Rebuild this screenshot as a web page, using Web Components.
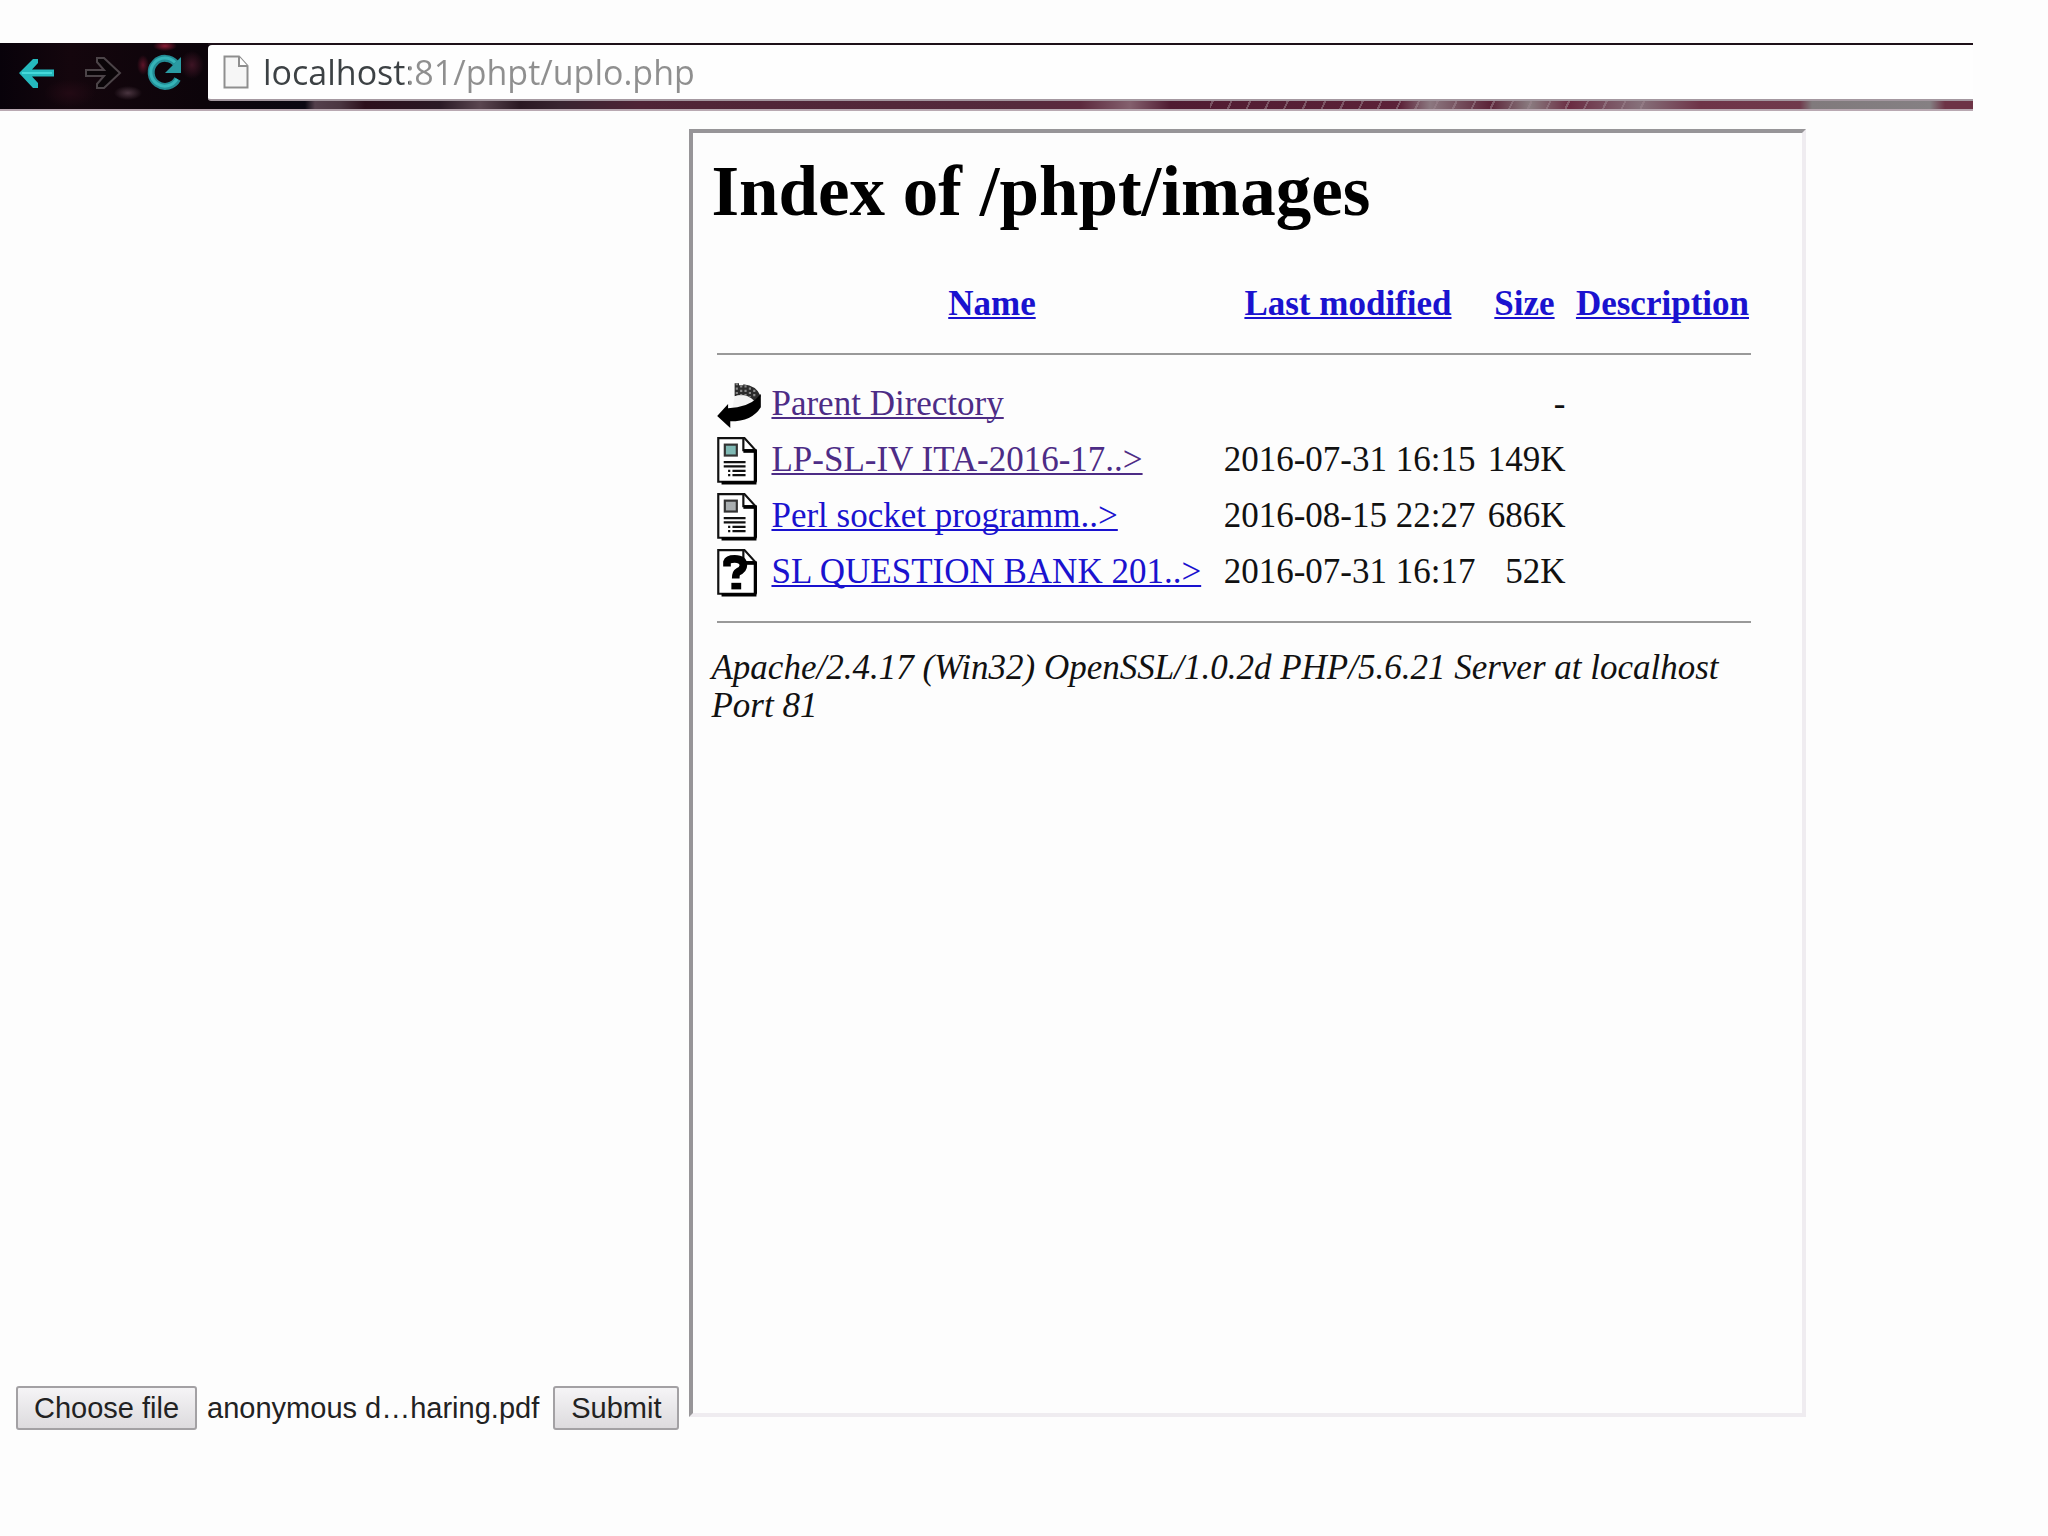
<!DOCTYPE html>
<html lang="en">
<head>
<meta charset="utf-8">
<title>localhost:81/phpt/uplo.php</title>
<style>
  html { background: #fdfdfd; }
  body { margin: 0; font-family: "Liberation Serif", "Times New Roman", serif; color: #111; }
</style>
</head>
<body>
<upload-page></upload-page>

<script>
class BrowserBar extends HTMLElement {
  constructor() {
    super();
    this.attachShadow({ mode: 'open' }).innerHTML = `
      <style>
        :host {
          display: flex; box-sizing: border-box; height: 68px; padding-top: 2px;
          border-bottom: 2px solid #b9a9b2;
          background:
            linear-gradient(#1d1018, #1d1018) 208px 0 / 100% 2px no-repeat,
            radial-gradient(ellipse 14px 7px at 128px 50px, #4a3540, transparent),
            radial-gradient(ellipse 12px 5px at 165px 3px, #8a1c34, transparent),
            radial-gradient(ellipse 6px 10px at 143px 22px, #5c1428, transparent),
            radial-gradient(ellipse 12px 14px at 192px 22px, #3d1424, transparent),
            radial-gradient(ellipse 26px 14px at 70px 50px, #220a14, transparent),
            repeating-linear-gradient(115deg, transparent 0 9px, #9c848e88 9px 11px, transparent 11px 17px) 1210px 0 / 440px 100% no-repeat,
            linear-gradient(90deg, #08020a 0, #14060d 70px, #0c040a 205px, #0b0812 305px, #54404c 315px,
              #4a3641 340px, #2c101c 365px, #2a1a25 440px, #5a4650 480px, #2a1822 520px, #382430 560px,
              #4f2436 640px, #552a3c 1020px, #5c2a3e 1080px, #84606e 1130px, #501c32 1170px, #5c2238 1400px,
              #8c7880 1430px, #5c2438 1490px, #8a7c80 1530px, #6a2c42 1570px, #86707a 1640px, #6e3448 1700px,
              #703a4c 1800px, #807a7c 1812px, #858083 1930px, #6d3346 1945px);
        }
        nav { display: flex; align-items: center; gap: 22px; box-sizing: border-box; width: 208px; padding: 0 0 8px 16px; }
        button { display: block; padding: 0; border: 0; background: none; width: 42px; height: 40px; }
        svg { display: block; width: 42px; height: 40px; overflow: visible; }
        form { flex: 1; display: flex; align-items: center; gap: 14px; height: 54px; margin: 0; padding-left: 15px;
          background: #fefefe; border-bottom: 2px solid #a498a0; border-radius: 4px 0 0 3px; }
        form svg { flex: none; width: 26px; height: 34px; }
        input { flex: 1; min-width: 0; height: 46px; padding: 0; border: 0; outline: 0;
          font: 34px/46px "Open Sans", "Noto Sans", sans-serif; color: transparent;
          background: linear-gradient(90deg, #3c4144 0 146px, #8f8f8f 146px); -webkit-background-clip: text; background-clip: text; }
      </style>
      <nav aria-label="History">
        <button type="button" aria-label="Back"><svg viewBox="0 0 42 40"><path d="M3 20 L17 6 H22 V10 L16 16.500 H38 V23.500 H16 L22 30 V35 H17 Z" fill="#25b9bd"/><path d="M6 20H36" stroke="#45d9da" stroke-width="2"/></svg></button>
        <button type="button" aria-label="Forward"><svg viewBox="0 0 42 40"><path d="M6 17H24L17 9V5H24L40 20L24 35H17V31L24 23H6Z" fill="#0a0508" stroke="#4c4448" stroke-width="2"/></svg></button>
        <button type="button" aria-label="Reload"><svg viewBox="0 0 42 40"><path d="M32 10.500A14 14 0 1 0 33.500 26" fill="none" stroke="#238b94" stroke-width="7"/><path d="M31 9.500A14 14 0 1 0 33 26" fill="none" stroke="#35b4b8" stroke-width="3"/><path d="M37 4V20H21Z" fill="#2a9aa2"/></svg></button>
      </nav>
      <form>
        <svg viewBox="0 0 26 34" aria-hidden="true"><path d="M1.500 1.500H16L24.500 11V32.500H1.500Z" fill="#f6f6f6" stroke="#8f8f8f" stroke-width="2"/><path d="M16 1.500V11H24.500" fill="#fff" stroke="#8f8f8f" stroke-width="2"/></svg>
        <input type="text" aria-label="Address" value="localhost:81/phpt/uplo.php" spellcheck="false">
      </form>`;
  }
}
customElements.define('browser-bar', BrowserBar);

const ICONS = {
  back: `
    <path d="M8 1H10V2H12V1.500Q18 2 20 7L17 9Q13 5.500 8 7Z" fill="#2b2b2b"/>
    <path d="M9 1V7M11 2V7M13 2V7M15 3V7.500M17 4V8" stroke="#888" stroke-width="1" stroke-dasharray="1 1"/>
    <path d="M8 7Q13 5.500 16.500 9Q12 12 7 12.500Z" fill="#f4f4f4"/>
    <path d="M0 16L5 10.500V12.500Q14 12 18 8L20 6V12Q16 18.500 6 18.500V21.500Z" fill="#000"/>`,
  sheet: `
    <path d="M.5 .5H12.500L17.500 6V20.500H.5Z" fill="#fff" stroke="#111"/>
    <path d="M17.500 6V20.500M18 21H2" fill="none" stroke="#000" stroke-width="1.500"/>
    <path d="M12 .5V6H18" fill="none" stroke="#111" stroke-width="1"/>
    <path d="M12 6.500H18" stroke="#000" stroke-width="1.500"/>`,
  unknown: `
    <path d="M4.500 8V6Q5 4.500 8 4.500Q12 4.500 12 7.500Q12 9.500 9.500 10.500Q8.500 11 8.500 13.500" fill="none" stroke="#000" stroke-width="3.500"/>
    <path d="M6.500 15.500H11V18.500H6.500Z" fill="#000"/>`
};
const layout = fill => `
    <rect x="3.500" y="3.500" width="5.500" height="5" fill="${fill}" stroke="#333"/>
    <path d="M3 11.500H13M3 13.500H13M7 15.500H13M5 15.500H6M5 17.500H6M7 17.500H13" stroke="#111"/>`;

class FileIcon extends HTMLElement {
  connectedCallback() {
    const kind = this.getAttribute('kind');
    const art = kind === 'back' ? ICONS.back
      : kind === 'unknown' ? ICONS.sheet + ICONS.unknown
      : ICONS.sheet + layout(kind === 'layout-color' ? '#7fb9b4' : '#a9aeb0');
    this.attachShadow({ mode: 'open' }).innerHTML = `
      <style>:host { display: block; } svg { display: block; width: 44px; height: 48px; }</style>
      <svg viewBox="0 0 20 22" aria-hidden="true">${art}</svg>`;
  }
}
customElements.define('file-icon', FileIcon);

class DirectoryIndex extends HTMLElement {
  constructor() {
    super();
    const files = [
      ['back', 'Parent Directory', '', '-', true],
      ['layout-color', 'LP-SL-IV ITA-2016-17..&gt;', '2016-07-31 16:15', '149K', true],
      ['layout', 'Perl socket programm..&gt;', '2016-08-15 22:27', '686K', false],
      ['unknown', 'SL QUESTION BANK 201..&gt;', '2016-07-31 16:17', '52K', false]
    ];
    this.attachShadow({ mode: 'open' }).innerHTML = `
      <style>
        :host { display: block; box-sizing: border-box; padding: 18px;
          border: 4px solid; border-color: #979598 #efecf0 #efecf0 #979598; font-size: 35px; line-height: 38px; }
        h1 { margin: 0 0 44px; font-size: 71px; line-height: 80px; color: #000; }
        table { width: 1046px; table-layout: fixed; border-spacing: 4px; border-collapse: separate; }
        th, td { padding: 2px; vertical-align: top; line-height: 46px; white-space: nowrap; }
        .row { height: 52px; }
        .num { text-align: right; }
        a { color: #1a12cf; text-decoration-thickness: 2px; text-underline-offset: 2px; text-decoration-skip-ink: none; }
        a.seen { color: #4d2c86; }
        hr { margin: 16px 0 18px; height: 2px; border: 0; background: #999; }
        address { margin-top: 2px; font-style: italic; }
      </style>
      <h1>Index of /phpt/images</h1>
      <table>
        <colgroup><col style="width:50px"><col style="width:445px"><col style="width:259px"><col style="width:86px"><col style="width:182px"></colgroup>
        <tr class="row"><th></th><th><a href="#name">Name</a></th><th><a href="#modified">Last modified</a></th><th><a href="#size">Size</a></th><th><a href="#description">Description</a></th></tr>
        <tr><th colspan="5"><hr></th></tr>
        ${files.map(([icon, name, date, size, seen]) => `
          <tr class="row"><td><file-icon kind="${icon}"></file-icon></td><td><a href="#file"${seen ? ' class="seen"' : ''}>${name}</a></td><td class="num">${date}</td><td class="num">${size}</td><td></td></tr>`).join('')}
        <tr><th colspan="5"><hr></th></tr>
      </table>
      <address><slot></slot></address>`;
  }
}
customElements.define('directory-index', DirectoryIndex);

class UploadForm extends HTMLElement {
  constructor() {
    super();
    const root = this.attachShadow({ mode: 'open' });
    root.innerHTML = `
      <style>
        :host { display: block; }
        form { display: flex; align-items: center; margin: 0; font: 29px/40px "Liberation Sans", Arial, sans-serif; color: #222; }
        button { box-sizing: border-box; height: 44px; padding: 0 16px; border: 2px solid #a3a1a4; border-radius: 3px;
          background: linear-gradient(#f5f4f6, #dddbde); font: inherit; color: inherit; }
        output { margin: 0 14px 0 10px; white-space: nowrap; }
      </style>
      <form>
        <input type="file" id="file" aria-label="File" hidden>
        <button type="button" id="choose">Choose file</button>
        <output for="file"><slot></slot></output>
        <button type="submit">Submit</button>
      </form>`;
    const file = root.getElementById('file');
    root.getElementById('choose').addEventListener('click', () => file.click());
  }
}
customElements.define('upload-form', UploadForm);

class UploadPage extends HTMLElement {
  constructor() {
    super();
    this.attachShadow({ mode: 'open' }).innerHTML = `
      <style>
        :host { display: block; padding-top: 43px; }
        browser-bar { margin-right: 75px; }
        main { display: flex; align-items: flex-end; gap: 10px; padding: 18px 242px 0 16px; }
        directory-index { flex: 1; min-height: calc(100vh - 248px); margin-bottom: 13px; }
      </style>
      <browser-bar></browser-bar>
      <main>
        <upload-form>anonymous d…haring.pdf</upload-form>
        <directory-index>Apache/2.4.17 (Win32) OpenSSL/1.0.2d PHP/5.6.21 Server at localhost Port 81</directory-index>
      </main>`;
  }
}
customElements.define('upload-page', UploadPage);
</script>
</body>
</html>
